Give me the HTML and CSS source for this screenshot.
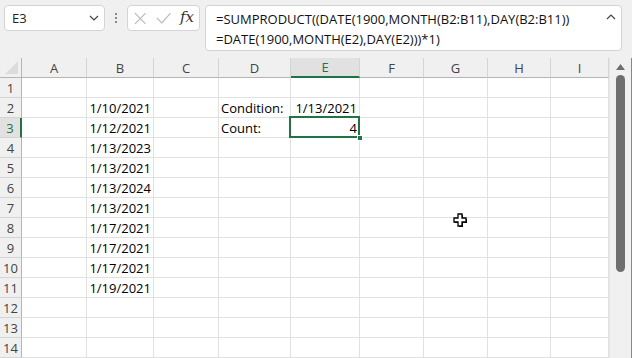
FILE: index.html
```html
<!DOCTYPE html>
<html lang="en">
<head>
    <meta charset="UTF-8">
    <title>Excel - SUMPRODUCT</title>
    <link rel="stylesheet" href="styles.css">
</head>
<body>

<!-- 数式バー -->
<div class="toolbar">
    <div class="name-box">
        <span>E3</span>
        <svg class="chev" width="10" height="6" viewBox="0 0 10 6"><path d="M1 1 L5 5 L9 1" fill="none" stroke="#444" stroke-width="1.2"/></svg>
    </div>
    <div class="dots"><i></i><i></i><i></i></div>
    <div class="fx-buttons">
        <svg width="13" height="13" viewBox="0 0 13 13"><path d="M1 1 L12 12 M12 1 L1 12" stroke="#b9b9b9" stroke-width="1.2"/></svg>
        <svg width="16" height="12" viewBox="0 0 16 12"><path d="M1 6 L6 11 L15 1" fill="none" stroke="#b9b9b9" stroke-width="1.2"/></svg>
        <span class="fx">fx</span>
    </div>
    <div class="formula">
        <div>=SUMPRODUCT((DATE(1900,MONTH(B2:B11),DAY(B2:B11))</div>
        <div>=DATE(1900,MONTH(E2),DAY(E2)))*1)</div>
        <svg class="up" width="10" height="6" viewBox="0 0 10 6"><path d="M1 5 L5 1 L9 5" fill="none" stroke="#444" stroke-width="1.2"/></svg>
    </div>
</div>

<!-- シート -->
<div class="sheet">
    <div id="grid" class="grid"></div>
    <div class="vscroll">
        <svg class="arrow" width="9" height="6" viewBox="0 0 9 6"><path d="M0 6 L4.5 0 L9 6 Z" fill="#6e6e6e"/></svg>
        <div class="thumb"></div>
    </div>
    <svg class="cursor" width="16" height="16" viewBox="0 0 16 16">
        <path d="M6 2 H10 V6 H14 V10 H10 V14 H6 V10 H2 V6 H6 Z" fill="#000" transform="translate(1,1)"/>
        <path d="M6 2 H10 V6 H14 V10 H10 V14 H6 V10 H2 V6 H6 Z" fill="#fff" stroke="#000" stroke-width="1.3"/>
    </svg>
</div>

<script>
    const grid = document.getElementById('grid');
    const cols = ['A', 'B', 'C', 'D', 'E', 'F', 'G', 'H', 'I'];
    const data = {
        'B2': '1/10/2021', 'B3': '1/12/2021', 'B4': '1/13/2023', 'B5': '1/13/2021',
        'B6': '1/13/2024', 'B7': '1/13/2021', 'B8': '1/17/2021', 'B9': '1/17/2021',
        'B10': '1/17/2021', 'B11': '1/19/2021',
        'D2': 'Condition:', 'D3': 'Count:', 'E2': '1/13/2021', 'E3': '4'
    };
    const textCells = ['D2', 'D3'];

    // 列見出し
    const corner = document.createElement('div');
    corner.className = 'head corner';
    grid.appendChild(corner);
    cols.forEach(c => {
        const h = document.createElement('div');
        h.className = 'head col-head' + (c === 'E' ? ' active' : '');
        h.textContent = c;
        grid.appendChild(h);
    });

    // 行
    for (let r = 1; r <= 14; r++) {
        const rh = document.createElement('div');
        rh.className = 'head row-head' + (r === 3 ? ' active' : '');
        rh.textContent = r;
        grid.appendChild(rh);
        cols.forEach(c => {
            const ref = c + r;
            const cell = document.createElement('div');
            cell.className = 'cell';
            if (data[ref]) {
                cell.textContent = data[ref];
                if (textCells.includes(ref)) cell.classList.add('text');
            }
            if (ref === 'E3') {
                cell.classList.add('selected');
                cell.innerHTML += '<span class="sel-box"></span><span class="handle"></span>';
            }
            grid.appendChild(cell);
        });
    }
</script>

</body>
</html>
```

FILE: styles.css
```css
body {
    margin: 0;
    width: 632px;
    height: 358px;
    overflow: hidden;
    background: #f0f0f0;
    font-family: "Open Sans", "Noto Sans", sans-serif;
    color: #000;
}
.toolbar {
    height: 58px;
    box-sizing: border-box;
    padding: 5px 10px 0 4px;
    display: flex;
    align-items: flex-start;
    background: #f0f0f0;
}
.name-box {
    width: 101px;
    height: 26px;
    box-sizing: border-box;
    background: #fff;
    border: 1px solid #d4d4d4;
    border-radius: 4px;
    display: flex;
    align-items: center;
    justify-content: space-between;
    padding: 0 5px 0 7px;
    font-size: 13px;
    color: #222;
}
.dots {
    width: 22px;
    height: 26px;
    display: flex;
    flex-direction: column;
    align-items: center;
    justify-content: center;
    gap: 2px;
}
.dots i {
    width: 2px;
    height: 2px;
    background: #888;
}
.fx-buttons {
    width: 73px;
    height: 26px;
    box-sizing: border-box;
    background: #fff;
    border: 1px solid #d4d4d4;
    border-radius: 4px;
    display: flex;
    align-items: center;
    gap: 9px;
    padding: 0 5px 0 6px;
}
.fx {
    font-family: "DejaVu Serif", "Liberation Serif", serif;
    font-style: italic;
    font-size: 15px;
    color: #333;
    margin-top: -2px;
}
.formula {
    position: relative;
    flex: 1;
    margin-left: 5px;
    height: 46px;
    box-sizing: border-box;
    background: #fff;
    border: 1px solid #d4d4d4;
    border-radius: 4px;
    padding: 3px 0 0 10px;
    font-size: 13px;
    line-height: 20px;
    color: #111;
}
.formula .up {
    position: absolute;
    right: 5px;
    top: 8px;
}
.sheet {
    position: relative;
    display: flex;
    height: 300px;
    background: #fff;
}
.grid {
    display: grid;
    grid-template-columns: 22px 65px 67px 65px 72px 69px 64px 64px 63px 58px;
    grid-auto-rows: 20px;
    width: 609px;
    overflow: hidden;
    font-size: 13px;
}
.head {
    background: #f0f0f0;
    color: #444;
    box-sizing: border-box;
    border-right: 1px solid #d4d4d4;
    border-bottom: 1px solid #d4d4d4;
    display: flex;
    align-items: center;
    justify-content: center;
    font-size: 13px;
}
.corner {
    position: relative;
    border-right: 1px solid #b5b5b5;
    border-bottom: 1px solid #b5b5b5;
}
.corner::after {
    content: "";
    position: absolute;
    right: 3px;
    bottom: 3px;
    border-left: 13px solid transparent;
    border-bottom: 13px solid #dcdcdc;
}
.col-head {
    border-bottom-color: #b5b5b5;
}
.row-head {
    border-right-color: #b5b5b5;
}
.head.active {
    background: #e1e1e1;
    color: #217346;
}
.col-head.active {
    border-bottom: 2px solid #217346;
}
.row-head.active {
    border-right: 2px solid #217346;
}
.cell {
    box-sizing: border-box;
    border-right: 1px solid #e1e1e1;
    border-bottom: 1px solid #e1e1e1;
    padding: 0 2px;
    text-align: right;
    line-height: 20px;
    white-space: nowrap;
}
.cell.text {
    text-align: left;
    padding-left: 2px;
    overflow: visible;
}
.cell.selected {
    position: relative;
    overflow: visible;
}
.sel-box {
    position: absolute;
    left: -2px;
    top: -2px;
    right: -1px;
    bottom: -1px;
    border: 2px solid #217346;
}
.handle {
    position: absolute;
    right: -4px;
    bottom: -4px;
    width: 6px;
    height: 6px;
    background: #217346;
    border: 1px solid #fff;
    box-sizing: border-box;
}
.vscroll {
    position: relative;
    flex: 1;
    background: #f0f0f0;
    border-left: 1px solid #e6e6e6;
    border-right: 1px solid #888;
}
.vscroll .arrow {
    position: absolute;
    left: 6px;
    top: 6px;
}
.vscroll .thumb {
    position: absolute;
    left: 6px;
    top: 17px;
    width: 9px;
    height: 197px;
    border-radius: 5px;
    background: #6e6e6e;
}
.cursor {
    position: absolute;
    left: 452px;
    top: 154px;
}
```
